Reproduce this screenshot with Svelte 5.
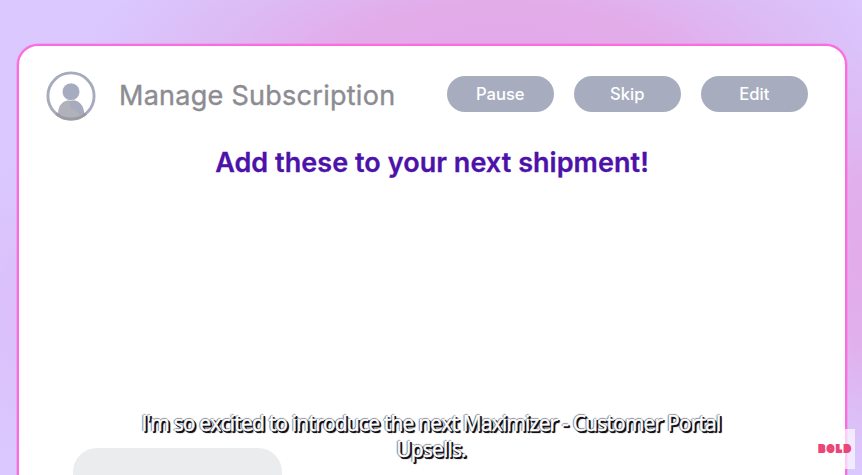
<script lang="ts">
  const actions = ['Pause', 'Skip', 'Edit'];
</script>

<div class="stage">
  <main class="card">
    <header>
      <svg class="avatar" viewBox="0 0 50 50" aria-hidden="true">
        <defs>
          <clipPath id="inside"><circle cx="25" cy="25" r="23" /></clipPath>
        </defs>
        <g clip-path="url(#inside)">
          <path d="M12 50v-7c0-9 5-14 13-14s13 5 13 14v7z" fill="#b0b1bb" />
          <path d="M23 29c9-1 15 5 15 14l-5 1-2-4-6-3z" fill="#a7abbd" />
        </g>
        <circle cx="25" cy="20.8" r="8.8" fill="#a7abbf" stroke="#fff" stroke-width="0.6" />
        <circle cx="25" cy="25" r="23.1" fill="none" stroke="#a7abbe" stroke-width="2.9" />
        <path d="M10 42.6a23.1 23.1 0 0 0 30 0" fill="none" stroke="#9b9ca3" stroke-width="2.9" />
      </svg>
      <h1>Manage Subscription</h1>
      <nav>
        {#each actions as action}
          <button>{action}</button>
        {/each}
      </nav>
    </header>
    <h2>Add these to your next shipment!</h2>
    <div class="product"></div>
  </main>

  <p class="caption"><span>I'm so excited to introduce the next Maximizer - Customer Portal</span><br />Upsells.</p>

  <div class="watermark"></div>
  <svg class="logo" viewBox="0 0 36 12" role="img" aria-label="BOLD">
    <text x="2 10.3 19.6 27.2" y="9">BOLD</text>
  </svg>
</div>

<style>
  :global(body) {
    margin: 0;
    overflow: hidden;
  }

  .stage {
    position: relative;
    box-sizing: border-box;
    width: 862px;
    height: 475px;
    padding: 44px 15px 0 17px;
    overflow: hidden;
    font-family: Inter, sans-serif;
    background:
      radial-gradient(ellipse 420px 170px at 500px 70px, #e3a8e8 0%, #e2ace9 40%, rgba(222, 180, 240, 0.75) 65%, transparent 100%),
      radial-gradient(ellipse 60px 210px at 860px 260px, #e2abe9 0%, #e0b0ec 40%, transparent 100%),
      radial-gradient(ellipse 60px 150px at 20px 310px, #dcbefa 0%, transparent 100%),
      #dac8fe;
  }

  .card {
    box-sizing: border-box;
    height: 480px;
    border: 2px solid #fb6cdd;
    border-radius: 21px;
    box-shadow: 0 0 0 0.6px rgba(251, 108, 221, 0.6);
    background: #fff;
    display: flex;
    flex-direction: column;
  }

  header {
    display: flex;
    align-items: center;
    height: 50px;
    margin: 24.5px 37px 0 26.5px;
  }

  .avatar {
    width: 50px;
    height: 50px;
    flex: none;
  }

  h1 {
    margin: 1px 0 0 23.5px;
    font-size: 27px;
    font-weight: 400;
    line-height: 34px;
    letter-spacing: 0.27px;
    color: #8d8c92;
    -webkit-text-stroke: 0.4px #8d8c92;
    white-space: nowrap;
  }

  nav {
    display: flex;
    gap: 19.5px;
    margin: 0 0 2.5px auto;
  }

  button {
    width: 107.5px;
    height: 36px;
    padding: 0;
    border: 0;
    border-radius: 18px;
    background: #a8acbf;
    color: #fff;
    font: 500 16.6px/36px Inter, sans-serif;
  }

  h2 {
    margin: 24px 0 0;
    font-size: 27px;
    font-weight: 600;
    line-height: 36px;
    letter-spacing: 0.05px;
    text-align: center;
    white-space: nowrap;
    color: #4c12a9;
    -webkit-text-stroke: 0.3px #4c12a9;
  }

  .product {
    flex: none;
    width: 209px;
    height: 80px;
    margin: 267.5px 0 0 54px;
    border-radius: 24px;
    background: #ebecee;
  }

  .caption {
    position: absolute;
    top: 410px;
    left: 0;
    width: 862px;
    margin: 0;
    font: 400 21px/26px "Open Sans", sans-serif;
    letter-spacing: -0.8px;
    text-align: center;
    white-space: nowrap;
    color: #fff;
    -webkit-text-stroke: 0.5px #fff;
    text-shadow:
      1px 1px 0 #10101c,
      2px 1px 0 #10101c,
      1px 2px 0 #10101c,
      2px 2px 1px #10101c,
      -1px 0 1px #66666c,
      0 -1px 1px #77777d;
  }

  .watermark {
    position: absolute;
    top: 429px;
    left: 844.5px;
    width: 10.5px;
    height: 40px;
    background: rgba(255, 255, 255, 0.65);
  }

  .logo {
    position: absolute;
    top: 443px;
    left: 817px;
    width: 36px;
    height: 12px;
  }

  .logo text {
    font: 900 8.4px Inter, sans-serif;
    fill: #ea4778;
    stroke: #ea4778;
    stroke-width: 2.1px;
  }
</style>
